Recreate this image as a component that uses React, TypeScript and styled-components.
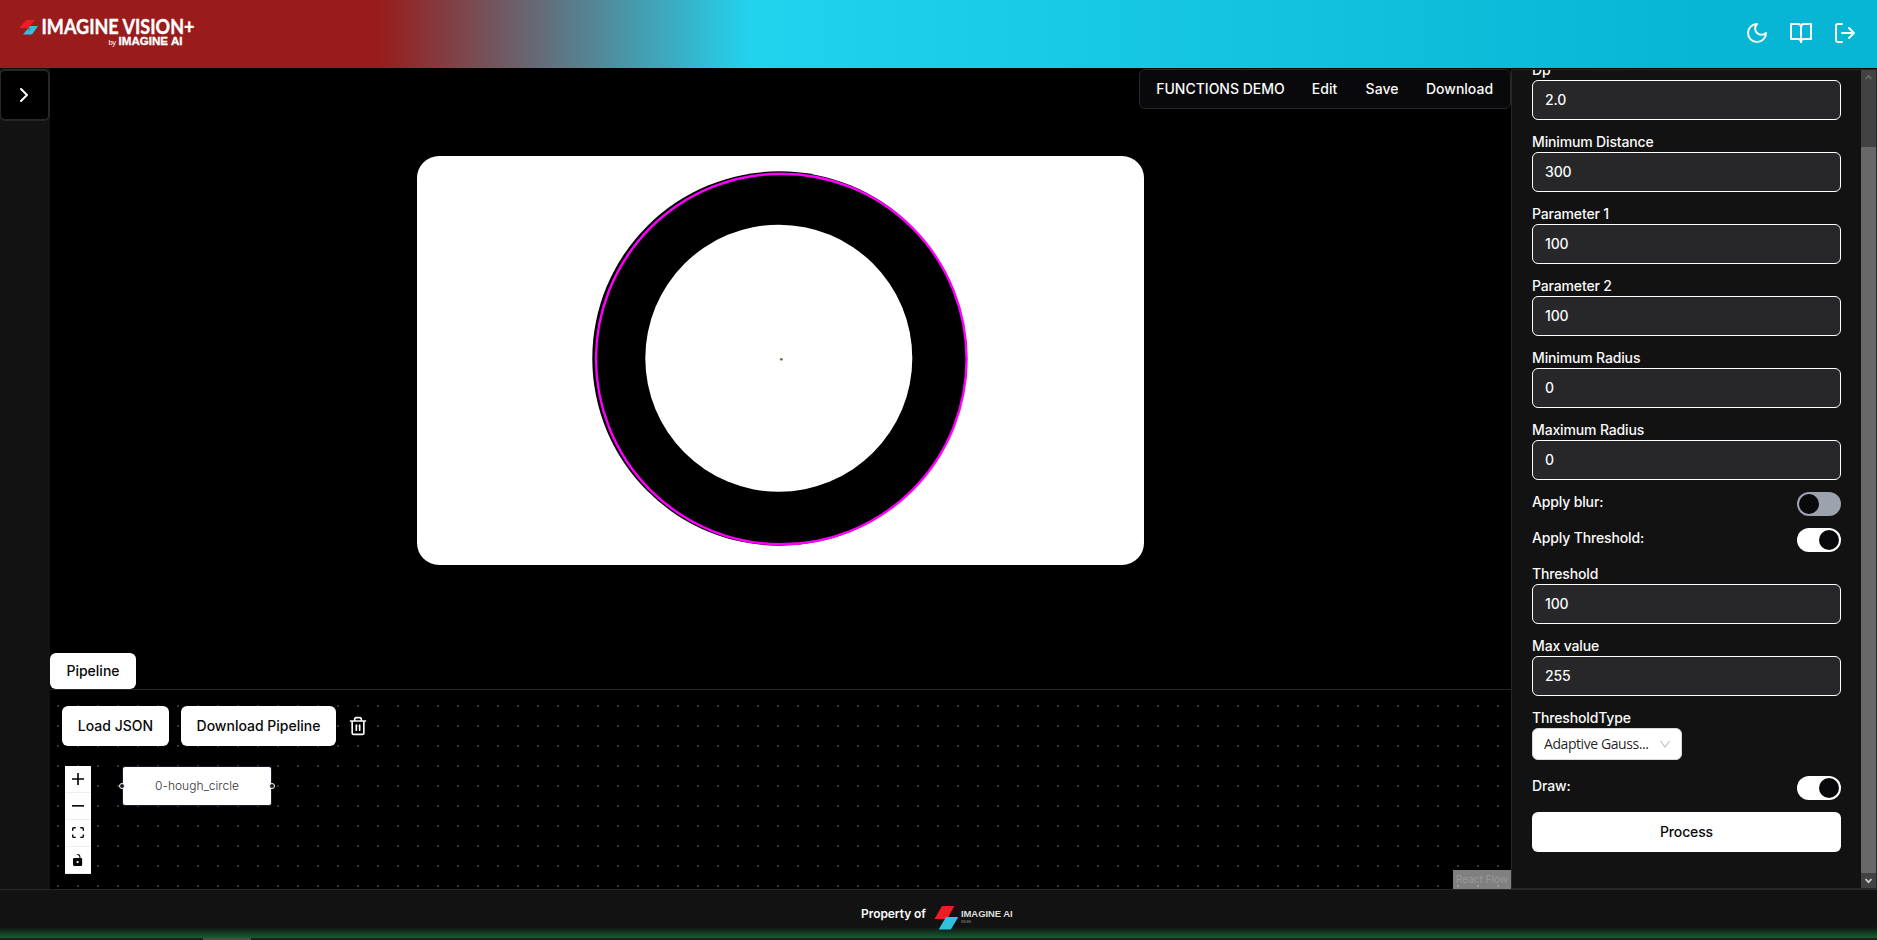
import React from 'react';
import styled, { createGlobalStyle } from 'styled-components';

const GlobalStyle = createGlobalStyle`
  *, *::before, *::after { box-sizing: border-box; }
  html, body { margin: 0; padding: 0; background: #000; overflow: hidden; }
  body { font-family: Inter, "Liberation Sans", sans-serif; font-size: 14px; line-height: 20px; font-weight: 500; color: #fafafa; }
  button, input { font: inherit; letter-spacing: inherit; }
  svg { display: block; flex: none; }
`;

const Page = styled.div`
  display: flex;
  flex-direction: column;
  width: 1877px;
  height: 940px;
  overflow: hidden;
  background: #000;
`;

const Header = styled.header`
  display: flex;
  align-items: center;
  justify-content: space-between;
  height: 68px;
  flex: none;
  padding: 2px 20px 4px 18px;
  background: linear-gradient(to right, #991b1b 0%, #991b1b 20%, #22d3ee 40%, #06b6d4 90%);
`;

const HeaderActions = styled.nav`
  display: flex;
  gap: 20px;
`;

const Body = styled.div`
  display: flex;
  height: 821px;
  flex: none;
`;

const Sidebar = styled.aside`
  width: 50px;
  flex: none;
  padding-top: 1px;
  background: #121212;
`;

const ToggleButton = styled.button`
  display: flex;
  align-items: center;
  justify-content: center;
  width: 51px;
  height: 52px;
  margin-left: -1px;
  padding: 0 2px 0 0;
  border: 2px solid #27272a;
  border-radius: 6px;
  background: #000;
  color: #fff;
`;

const Workspace = styled.main`
  display: flex;
  flex-direction: column;
  width: 1461px;
  flex: none;
`;

const Stage = styled.section`
  display: flex;
  flex-direction: column;
  height: 621px;
  padding-top: 1px;
`;

const Menubar = styled.div`
  display: flex;
  align-items: center;
  align-self: flex-end;
  height: 40px;
  padding: 0 3px 0 4px;
  border: 1px solid #27272a;
  border-radius: 6px;
  background: #09090b;
`;

const MenuItem = styled.span<{ $width: number }>`
  width: ${(p) => p.$width}px;
  text-align: center;
  white-space: nowrap;
`;

const Preview = styled.div`
  width: 727px;
  height: 409px;
  margin: 47px 0 0 367px;
  border-radius: 22px;
  overflow: hidden;
  background: #fff;
`;

const PipelineTab = styled.div`
  display: flex;
  align-items: center;
  justify-content: center;
  width: 86px;
  height: 36px;
  margin-top: auto;
  border-radius: 6px;
  background: #fff;
  color: #09090b;
  font-weight: 450;
`;

const FlowPane = styled.section`
  position: relative;
  flex: 1;
  border-top: 1px solid #27272a;
  padding: 16px 12px;
  background: #000;
  overflow: hidden;
`;

const Dots = styled.svg`
  position: absolute;
  inset: 0;
`;

const FlowToolbar = styled.div`
  position: relative;
  display: flex;
  align-items: center;
  gap: 12px;
`;

const Button = styled.button<{ $width?: number }>`
  width: ${(p) => (p.$width ? `${p.$width}px` : '100%')};
  height: 40px;
  padding: 0;
  border: 0;
  border-radius: 6px;
  background: #fff;
  color: #09090b;
  font-weight: 450;
  white-space: nowrap;
`;

const Controls = styled.div`
  position: relative;
  display: flex;
  flex-direction: column;
  width: 26px;
  margin: 20px 0 0 3px;
  background: #fefefe;
`;

const ControlButton = styled.div`
  display: flex;
  align-items: center;
  justify-content: center;
  height: 27px;
  border-bottom: 1px solid #eee;
`;

const FlowNode = styled.div`
  position: absolute;
  left: 72px;
  top: 76px;
  display: flex;
  align-items: center;
  justify-content: center;
  width: 150px;
  height: 40px;
  border: 1px solid #1a192b;
  border-radius: 3px;
  background: #fff;
  color: #333;
  font-size: 12px;
  font-weight: 350;
`;

const Handle = styled.i<{ $side: 'left' | 'right' }>`
  position: absolute;
  top: 16px;
  ${(p) => p.$side}: -4px;
  width: 6px;
  height: 6px;
  border: 1px solid #fff;
  border-radius: 50%;
  background: #1a192b;
`;

const Attribution = styled.div`
  position: absolute;
  right: 0;
  bottom: 0;
  width: 58px;
  height: 19px;
  background: rgba(255, 255, 255, 0.5);
  color: #999;
  font-size: 10px;
  line-height: 19px;
  font-weight: 400;
  text-align: center;
`;

const Panel = styled.aside`
  display: flex;
  flex: 1;
  height: 820px;
  margin-top: 1px;
  border: 1px solid #27272a;
  background: #121212;
  letter-spacing: -0.15px;
  overflow: hidden;
`;

const Form = styled.form`
  display: flex;
  flex-direction: column;
  gap: 12px;
  width: 349px;
  height: 818px;
  padding: 0 20px;
  overflow: hidden;
`;

const Field = styled.label<{ $clip?: number }>`
  display: flex;
  flex-direction: column;
  margin-top: ${(p) => -(p.$clip ?? 0)}px;
`;

const Input = styled.input`
  height: 40px;
  width: 309px;
  padding: 0 12px 2px;
  border: 1px solid #fff;
  border-radius: 6px;
  background: #27272a;
  color: #fafafa;
  outline: none;
`;

const SwitchRow = styled.div`
  display: flex;
  align-items: flex-start;
  justify-content: space-between;
  height: 24px;
`;

const Track = styled.span<{ $on?: boolean }>`
  display: flex;
  justify-content: ${(p) => (p.$on ? 'flex-end' : 'flex-start')};
  width: 44px;
  height: 24px;
  padding: 2px;
  border-radius: 12px;
  background: ${(p) => (p.$on ? '#fff' : '#9ca3af')};
`;

const Thumb = styled.span`
  width: 20px;
  height: 20px;
  border-radius: 50%;
  background: #09090b;
`;

const Select = styled.div`
  display: flex;
  align-items: center;
  justify-content: space-between;
  width: 150px;
  height: 32px;
  margin-bottom: 4px;
  padding: 0 10px 0 11px;
  border: 1px solid #d9d9d9;
  border-radius: 6px;
  background: #fff;
  color: rgba(0, 0, 0, 0.88);
  font-family: "Open Sans", "Noto Sans", sans-serif;
  font-weight: 400;
  letter-spacing: -0.43px;
`;

const Scrollbar = styled.div`
  display: flex;
  flex-direction: column;
  width: 15px;
  height: 818px;
  background: #424242;
`;

const ScrollArrow = styled.div`
  display: flex;
  align-items: center;
  justify-content: center;
  height: 15px;
`;

const ScrollTrack = styled.div`
  flex: 1;
  padding-top: 62px;
`;

const ScrollThumb = styled.div`
  height: 100%;
  background: #686868;
`;

const Footer = styled.footer`
  display: flex;
  align-items: center;
  justify-content: center;
  gap: 8px;
  height: 49px;
  flex: none;
  border-top: 1px solid #27272a;
  background: linear-gradient(to bottom, rgba(22, 101, 52, 0) 37px, #166534 49px), #121212;
  font-size: 12px;
  font-weight: 600;
  letter-spacing: -0.08px;
`;

const BottomEdge = styled.div`
  height: 2px;
  flex: none;
  padding-left: 203px;
  background: #231c24;
`;

const EdgeMark = styled.div`
  width: 48px;
  height: 2px;
  background: #504a50;
`;

const HeaderLogo = () => (
  <svg width="190" height="46" viewBox="18 10 190 46">
    <path d="M26 20h9l-7 8H19z" fill="#ee1c25" />
    <path d="M30 26h8l-6 8.500h-9z" fill="#2fc1de" />
    <path d="M26 28h5l-2 3z" fill="#991b1b" opacity="0.35" />
    <g fill="#fff">
      <text x="41.500" y="34" fontFamily="Lato" fontWeight="700" fontSize="20" stroke="#fff" strokeWidth="0.400" textLength="153" lengthAdjust="spacingAndGlyphs">IMAGINE VISION+</text>
      <text x="108.500" y="45" fontFamily="Liberation Sans" fontSize="7.500" textLength="7.500">by</text>
      <text x="118.500" y="45" fontFamily="Liberation Sans" fontWeight="700" fontSize="10.600" stroke="#fff" strokeWidth="0.300" textLength="64" lengthAdjust="spacingAndGlyphs">IMAGINE AI</text>
    </g>
  </svg>
);

const FooterLogo = () => (
  <svg width="82" height="32" viewBox="934 898 82 32">
    <path d="M942 906h12.300l-7 13H934.500z" fill="#ee1c25" />
    <path d="M946 917h12.300l-7.500 12.500H938.700z" fill="#2fc1de" />
    <text x="961" y="916.600" fill="#dedede" fontFamily="Liberation Sans" fontWeight="700" fontSize="9.800" textLength="51.500" lengthAdjust="spacingAndGlyphs">IMAGINE AI</text>
    <text x="961" y="922.500" fill="#777" fontFamily="Liberation Sans" fontSize="3" textLength="10.500" lengthAdjust="spacingAndGlyphs">SDN. BHD.</text>
  </svg>
);

const StrokeIcon = ({ size = 24, children }: { size?: number; children: React.ReactNode }) => (
  <svg width={size} height={size} viewBox="0 0 24 24" fill="none" stroke="currentColor" strokeWidth={2} strokeLinecap="round" strokeLinejoin="round">
    {children}
  </svg>
);

const fields = [
  ['Dp', '2.0'],
  ['Minimum Distance', '300'],
  ['Parameter 1', '100'],
  ['Parameter 2', '100'],
  ['Minimum Radius', '0'],
  ['Maximum Radius', '0'],
];
const thresholdFields = [
  ['Threshold', '100'],
  ['Max value', '255'],
];

const Toggle = ({ label, on }: { label: string; on?: boolean }) => (
  <SwitchRow>
    <span>{label}</span>
    <Track $on={on}>
      <Thumb />
    </Track>
  </SwitchRow>
);

export default function App() {
  return (
    <Page>
      <GlobalStyle />
      <Header>
        <HeaderLogo />
        <HeaderActions>
          <StrokeIcon>
            <path d="M12 3a6 6 0 0 0 9 9 9 9 0 1 1-9-9Z" />
          </StrokeIcon>
          <StrokeIcon>
            <path d="M2 3h7a3 3 0 0 1 3 3v15a3 3 0 0 0-3-3H2z" />
            <path d="M22 3h-7a3 3 0 0 0-3 3v15a3 3 0 0 1 3-3h7z" />
          </StrokeIcon>
          <StrokeIcon>
            <path d="M9 21H5a2 2 0 0 1-2-2V5a2 2 0 0 1 2-2h4" />
            <path d="M16 17l5-5-5-5M21 12H9" />
          </StrokeIcon>
        </HeaderActions>
      </Header>
      <Body>
        <Sidebar>
          <ToggleButton aria-label="Expand">
            <StrokeIcon>
              <path d="m9 18 6-6-6-6" />
            </StrokeIcon>
          </ToggleButton>
        </Sidebar>
        <Workspace>
          <Stage>
            <Menubar>
              <MenuItem $width={153}>FUNCTIONS DEMO</MenuItem>
              <MenuItem $width={55}>Edit</MenuItem>
              <MenuItem $width={60}>Save</MenuItem>
              <MenuItem $width={95}>Download</MenuItem>
            </Menubar>
            <Preview>
              <svg width="727" height="409" viewBox="417 156 727 409">
                <circle cx="779.500" cy="358.500" r="187.200" fill="#000" />
                <circle cx="778.800" cy="358.200" r="133.500" fill="#fff" />
                <circle cx="781.300" cy="359" r="185.300" fill="none" stroke="#f0f" strokeWidth="2.400" />
                <circle cx="781.300" cy="359.300" r="1.400" fill="#77702a" />
              </svg>
            </Preview>
            <PipelineTab>Pipeline</PipelineTab>
          </Stage>
          <FlowPane>
            <Dots width="1461" height="199">
              <defs>
                <pattern id="dots" x="7" y="15" width="20" height="20" patternUnits="userSpaceOnUse">
                  <rect width="2" height="2" fill="#333" />
                </pattern>
              </defs>
              <rect width="1461" height="199" fill="url(#dots)" />
            </Dots>
            <FlowToolbar>
              <Button $width={107}>Load JSON</Button>
              <Button $width={155}>Download Pipeline</Button>
              <StrokeIcon size={20}>
                <path d="M3 6h18M19 6v14a2 2 0 0 1-2 2H7a2 2 0 0 1-2-2V6M8 6V4a2 2 0 0 1 2-2h4a2 2 0 0 1 2 2v2M10 11v6M14 11v6" />
              </StrokeIcon>
            </FlowToolbar>
            <Controls>
              <ControlButton>
                <svg width="12" height="12" viewBox="0 0 32 32">
                  <path d="M32 18.133H18.133V32h-4.266V18.133H0v-4.266h13.867V0h4.266v13.867H32z" />
                </svg>
              </ControlButton>
              <ControlButton>
                <svg width="12" height="2" viewBox="0 0 32 5">
                  <path d="M0 0h32v4.200H0z" />
                </svg>
              </ControlButton>
              <ControlButton>
                <svg width="12" height="11.250" viewBox="0 0 32 30">
                  <path d="M3.692 4.630c0-.530.400-.938.939-.938h5.215V0H4.708C2.130 0 0 2.054 0 4.630v5.216h3.692V4.631zM27.354 0h-5.200v3.692h5.170c.530 0 .984.400.984.939v5.215H32V4.631A4.624 4.624 0 0027.354 0zm.954 24.830c0 .532-.400.940-.939.940h-5.215v3.768h5.215c2.577 0 4.631-2.130 4.631-4.707v-5.139h-3.692v5.139zm-23.677.940c-.531 0-.939-.400-.939-.940v-5.138H0v5.139c0 2.577 2.130 4.707 4.708 4.707h5.138V25.770H4.631z" />
                </svg>
              </ControlButton>
              <ControlButton>
                <svg width="9.400" height="12" viewBox="0 0 25 32">
                  <path d="M21.333 10.667H19.810V7.619C19.810 3.429 16.380 0 12.190 0c-4.114 1.828-1.370 2.133.305 2.438 1.676.305 4.420 2.590 4.420 5.181v3.048H3.047A3.056 3.056 0 000 13.714v15.238A3.056 3.056 0 003.048 32h18.285a3.056 3.056 0 003.048-3.048V13.714a3.056 3.056 0 00-3.048-3.047zM12.190 24.533a3.056 3.056 0 01-3.047-3.047 3.056 3.056 0 013.047-3.048 3.056 3.056 0 013.048 3.048 3.056 3.056 0 01-3.048 3.047z" />
                </svg>
              </ControlButton>
            </Controls>
            <FlowNode>
              <Handle $side="left" />
              0-hough_circle
              <Handle $side="right" />
            </FlowNode>
            <Attribution>React Flow</Attribution>
          </FlowPane>
        </Workspace>
        <Panel>
          <Form>
            {fields.map(([label, value], i) => (
              <Field key={label} $clip={i === 0 ? 10 : 0}>
                <span>{label}</span>
                <Input defaultValue={value} />
              </Field>
            ))}
            <Toggle label="Apply blur:" />
            <Toggle label="Apply Threshold:" on />
            {thresholdFields.map(([label, value]) => (
              <Field key={label}>
                <span>{label}</span>
                <Input defaultValue={value} />
              </Field>
            ))}
            <Field>
              <span>ThresholdType</span>
              <Select>
                <span>Adaptive Gauss...</span>
                <svg width="12" height="12" viewBox="0 0 12 12" fill="none" stroke="#bfbfbf" strokeWidth="1.100">
                  <path d="M1.500 3l4.500 6 4.500-6" />
                </svg>
              </Select>
            </Field>
            <Toggle label="Draw:" on />
            <Button type="button">Process</Button>
          </Form>
          <Scrollbar>
            <ScrollArrow>
              <svg width="7" height="7" viewBox="0 0 7 7" fill="none" stroke="#686868" strokeWidth="1.800">
                <path d="M.5 5l3-3.200 3 3.200" />
              </svg>
            </ScrollArrow>
            <ScrollTrack>
              <ScrollThumb />
            </ScrollTrack>
            <ScrollArrow>
              <svg width="7" height="7" viewBox="0 0 7 7" fill="none" stroke="#cdcdcd" strokeWidth="1.800">
                <path d="M.5 2l3 3.200 3-3.200" />
              </svg>
            </ScrollArrow>
          </Scrollbar>
        </Panel>
      </Body>
      <Footer>
        <span>Property of</span>
        <FooterLogo />
      </Footer>
      <BottomEdge>
        <EdgeMark />
      </BottomEdge>
    </Page>
  );
}
